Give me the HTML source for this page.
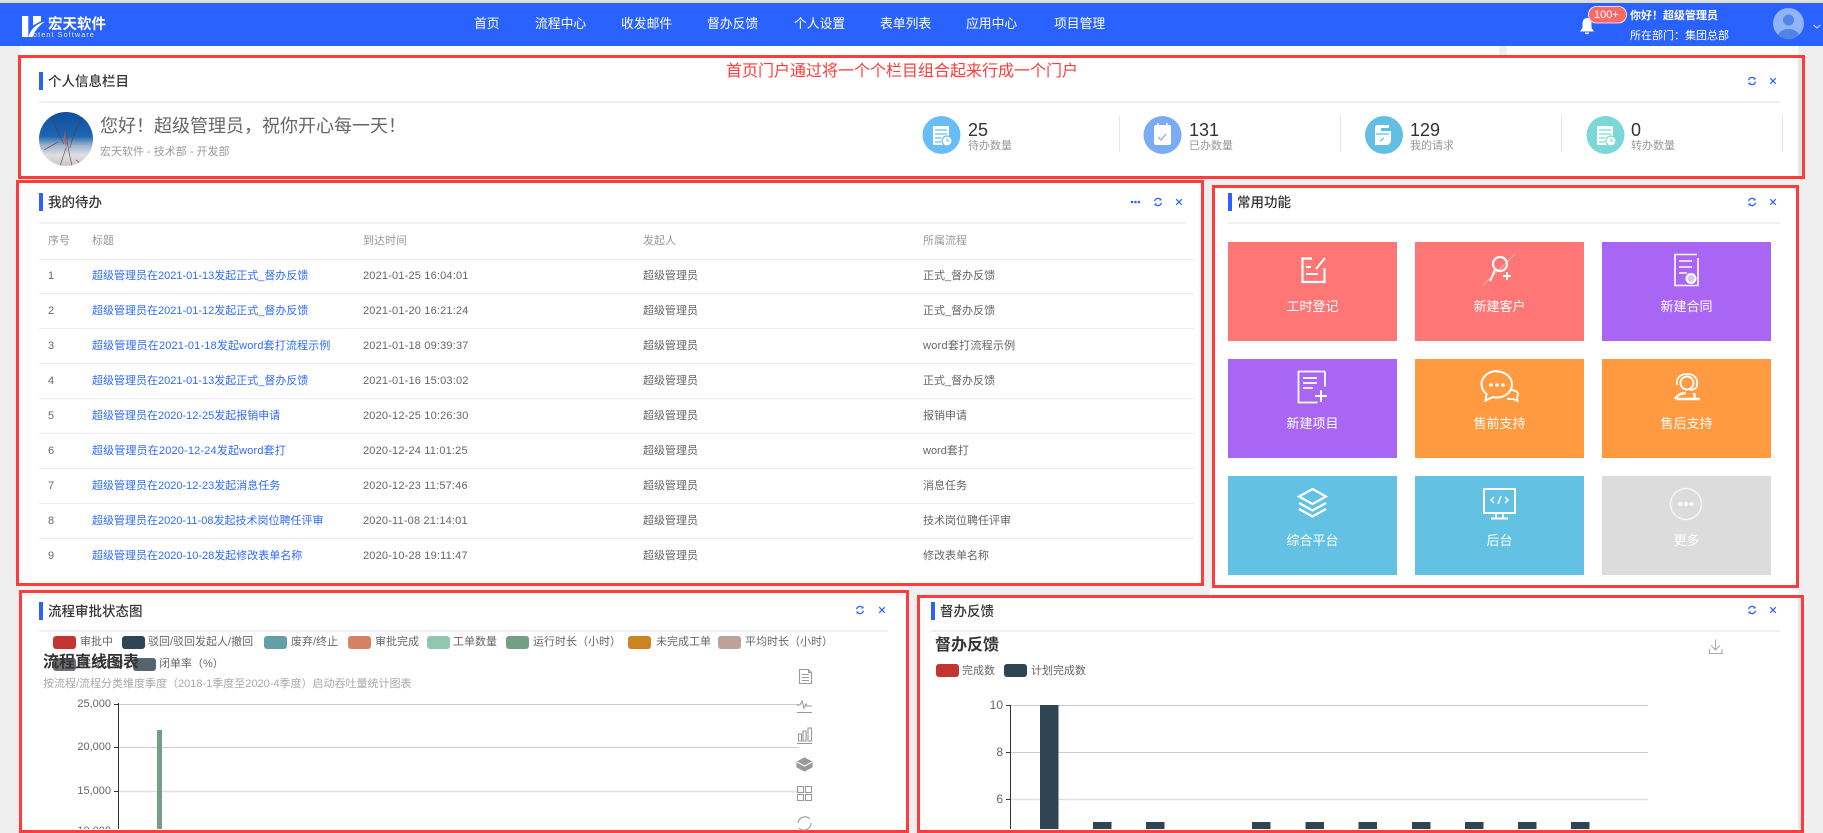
<!DOCTYPE html>
<html lang="zh">
<head>
<meta charset="utf-8">
<title>首页门户</title>
<style>
html,body{margin:0;padding:0;width:1823px;height:833px;overflow:hidden;background:#efefef;font-family:"Liberation Sans","Noto Sans CJK SC",sans-serif;}
#p{position:absolute;left:0;top:0;width:1823px;height:833px;overflow:hidden;filter:blur(.3px);}
.a{position:absolute;}
.t{position:absolute;white-space:nowrap;line-height:20px;height:20px;font-size:11px;}
.box{position:absolute;box-sizing:border-box;border:3px solid #ff3b3b;background:#fff;}
.w{position:absolute;background:#fff;}
.bar{position:absolute;width:4px;height:18px;background:#2962ff;}
.hr{position:absolute;height:2px;background:#eef0f5;}
.title{font-size:13.5px;color:#333;font-weight:500;}
.nav{color:#fff;font-size:12.8px;top:14px;}
.th{color:#999;top:231px;}
.td{color:#666;}
.dt{letter-spacing:.18px;}
.lk{color:#2f6bff;}
.rl{position:absolute;left:39px;width:1155px;height:1px;background:#e9ecf2;}
.tile{position:absolute;width:169px;height:99px;}
.tl{position:absolute;left:0;width:100%;top:55px;text-align:center;color:#fff;font-size:13px;line-height:20px;}
.num{font-size:18px;color:#333;top:120px;}
.sl{color:#999;top:136px;}
.sw{position:absolute;width:23px;height:13px;border-radius:3px;}
.lg{color:#666;}
.ax{color:#666;text-align:right;width:60px;}
</style>
</head>
<body>
<div id="p">
<div class="a" style="left:0;top:0;width:1823px;height:3px;background:#dedede"></div>
<div class="a" style="left:0;top:3px;width:1823px;height:43px;background:#2962ff"></div>
<div class="w" style="left:20px;top:46px;width:1479px;height:9px"></div>
<div class="w" style="left:1507px;top:46px;width:291px;height:9px"></div>
<div class="w" style="left:1210px;top:586px;width:588px;height:10px"></div>

<div class="box" style="left:18px;top:55px;width:1787px;height:124px"></div>
<div class="a" style="left:1798px;top:58px;width:4px;height:118px;background:#e6e6ea"></div>
<div class="box" style="left:16px;top:180px;width:1188px;height:406px"></div>
<div class="box" style="left:1212px;top:185px;width:587px;height:403px"></div>
<div class="box" style="left:19px;top:590px;width:890px;height:243px"></div>
<div class="box" style="left:917px;top:595px;width:887px;height:238px"></div>
<div class="a" style="left:1798px;top:598px;width:3px;height:231px;background:#e6e6ea"></div>

<!-- tiles -->
<div class="tile" style="left:1228px;top:242px;background:#ff7676"><div class="tl">工时登记</div></div>
<div class="tile" style="left:1415px;top:242px;background:#ff7676"><div class="tl">新建客户</div></div>
<div class="tile" style="left:1602px;top:242px;background:#a966f5"><div class="tl">新建合同</div></div>
<div class="tile" style="left:1228px;top:359px;background:#a966f5"><div class="tl">新建项目</div></div>
<div class="tile" style="left:1415px;top:359px;background:#ff9a40"><div class="tl">售前支持</div></div>
<div class="tile" style="left:1602px;top:359px;background:#ff9a40"><div class="tl">售后支持</div></div>
<div class="tile" style="left:1228px;top:476px;background:#63c1e3"><div class="tl">综合平台</div></div>
<div class="tile" style="left:1415px;top:476px;background:#63c1e3"><div class="tl">后台</div></div>
<div class="tile" style="left:1602px;top:476px;background:#dcdcdc"><div class="tl">更多</div></div>

<!-- dividers -->
<div class="hr" style="left:39px;top:101px;width:1741px"></div>
<div class="hr" style="left:39px;top:222px;width:1147px"></div>
<div class="hr" style="left:1228px;top:222px;width:552px"></div>
<div class="hr" style="left:39px;top:630px;width:849px"></div>
<div class="hr" style="left:931px;top:630px;width:849px"></div>
<div class="bar" style="left:39px;top:72px"></div>
<div class="bar" style="left:39px;top:193px"></div>
<div class="bar" style="left:1228px;top:193px"></div>
<div class="bar" style="left:39px;top:602px"></div>
<div class="bar" style="left:931px;top:602px"></div>

<!-- table lines -->
<div class="rl" style="top:259px"></div><div class="rl" style="top:293px"></div><div class="rl" style="top:328px"></div>
<div class="rl" style="top:363px"></div><div class="rl" style="top:398px"></div><div class="rl" style="top:433px"></div>
<div class="rl" style="top:468px"></div><div class="rl" style="top:503px"></div><div class="rl" style="top:538px"></div>

<!-- chart swatches -->
<div class="sw" style="left:53px;top:636px;background:#c23531"></div>
<div class="sw" style="left:122px;top:636px;background:#2f4554"></div>
<div class="sw" style="left:264px;top:636px;background:#61a0a8"></div>
<div class="sw" style="left:348px;top:636px;background:#d48265"></div>
<div class="sw" style="left:427px;top:636px;background:#91c7ae"></div>
<div class="sw" style="left:506px;top:636px;background:#749f83"></div>
<div class="sw" style="left:628px;top:636px;background:#ca8622"></div>
<div class="sw" style="left:718px;top:636px;background:#bda29a"></div>
<div class="sw" style="left:53px;top:658px;background:#6e7074"></div>
<div class="sw" style="left:133px;top:658px;background:#546570"></div>
<div class="sw" style="left:936px;top:664px;background:#c23531"></div>
<div class="sw" style="left:1004px;top:664px;background:#2f4554"></div>

<svg class="a" style="left:0;top:0" width="1823" height="833" viewBox="0 0 1823 833" fill="none">
<defs>
<symbol id="rf" viewBox="0 0 10 10"><path d="M1.2 4.2A3.9 3.9 0 0 1 8 2.4M8.8 5.8A3.9 3.9 0 0 1 2 7.6" stroke="#2962ff" stroke-width="1.4"/><path d="M8.9 0.6V3.4H6.2zM1.1 9.4V6.6H3.8z" fill="#2962ff"/></symbol>
<symbol id="cl" viewBox="0 0 10 10"><path d="M1.5 1.5L8.5 8.5M8.5 1.5L1.5 8.5" stroke="#2962ff" stroke-width="1.5"/></symbol>
<clipPath id="av1"><circle cx="66" cy="139" r="27"/></clipPath>
<clipPath id="av2"><circle cx="1788.5" cy="23.5" r="15.5"/></clipPath>
<linearGradient id="sky" x1="0" y1="0" x2="0" y2="1"><stop offset="0" stop-color="#0f4f9e"/><stop offset=".45" stop-color="#1c66b2"/><stop offset=".62" stop-color="#9db3cc"/><stop offset=".8" stop-color="#dfe0e3"/><stop offset="1" stop-color="#c9c6c8"/></linearGradient>
</defs>

<!-- logo -->
<g fill="#fff">
<rect x="22" y="16" width="6.3" height="21"/>
<path d="M33 16h8v5l-8 4.5z"/>
<path d="M28.500 37C30.500 29 36 24 45 21.500 40 25 35 30 32.500 37z"/>
</g>

<!-- bell -->
<path d="M1587 18c-3 0-4.500 2.500-4.500 5.500v4.500l-2.500 3.500h14L1591.500 28v-4.500c0-3-1.500-5.500-4.500-5.500z" fill="#fff"/>
<path d="M1585 32.500a2 1.800 0 0 0 4 0z" fill="#fff"/>
<rect x="1588.500" y="6.500" width="38" height="16.500" rx="8" fill="#f86a6a" stroke="#fff" stroke-width=".8"/>

<!-- header avatar -->
<circle cx="1788.500" cy="23.500" r="15.500" fill="#8fb4f7"/>
<g clip-path="url(#av2)"><circle cx="1788.500" cy="20" r="5.500" fill="#4f84e8"/><ellipse cx="1788.500" cy="37" rx="11" ry="8" fill="#4f84e8"/></g>
<path d="M1813.500 25l3.500 3 3.500-3" stroke="#dfe8ff" stroke-width="1"/>

<!-- profile photo -->
<circle cx="66" cy="139" r="27" fill="url(#sky)"/>
<g clip-path="url(#av1)" stroke="#7a3036" stroke-width=".8" opacity=".75">
<path d="M50 112c4 10 8 22 14 32M66 130c0 12 4 26 6 36M82 118c-5 10-10 20-12 30M44 150l14-8M60 166l6-18M76 160l8 6"/>
<path d="M65 129l2 12-1 6-2-8z" fill="#b25a50" stroke="none"/>
</g>

<!-- stat circles -->
<circle cx="941.500" cy="135" r="19" fill="#68bcf8"/>
<circle cx="1162.500" cy="135" r="19" fill="#7aabf5"/>
<circle cx="1384" cy="135" r="19" fill="#62bfe3"/>
<circle cx="1605.500" cy="135" r="19" fill="#7cd8d8"/>
<g fill="#fff">
<rect x="933" y="126" width="16" height="19" rx="1"/>
<rect x="1154" y="125" width="17" height="20" rx="2"/>
<path d="M1375 128c0-2 1-3 3-3h11v3h-8v3h10v9c0 2-1 5-5 5h-11z"/>
<rect x="1597" y="126" width="16" height="19" rx="1"/>
</g>
<g stroke="#68bcf8" stroke-width="1.200"><path d="M935 130h12M935 134h12M935 138h6M935 142h6"/></g>
<circle cx="947" cy="141" r="5" fill="#fff" stroke="#68bcf8" stroke-width="1.200"/><path d="M947 138v3h2.500" stroke="#68bcf8"/>
<g stroke="#7aabf5" stroke-width="1.200"><path d="M1158 123v4M1167 123v4M1158 137l3 3 5-6"/></g>
<path d="M1158 123v4M1167 123v4" stroke="#fff" stroke-width="1.500"/>
<g stroke="#62bfe3" stroke-width="1.200"><path d="M1376 134h13M1380 141l4-3"/></g>
<g stroke="#7cd8d8" stroke-width="1.200"><path d="M1599 130h12M1599 134h12M1599 138h6M1599 142h6"/></g>
<circle cx="1611" cy="141" r="5" fill="#fff" stroke="#7cd8d8" stroke-width="1.200"/><path d="M1611 138v3h2.500" stroke="#7cd8d8"/>
<g stroke="#e5e5e5"><path d="M1119.500 116v36M1340.500 116v36M1561.500 116v36M1782.500 116v36"/></g>

<!-- card tool icons -->
<use href="#rf" x="1747.500" y="76.500" width="9" height="9"/><use href="#cl" x="1769" y="77" width="8" height="8"/>
<g fill="#2962ff"><circle cx="1132" cy="202" r="1.300"/><circle cx="1135.500" cy="202" r="1.300"/><circle cx="1139" cy="202" r="1.300"/></g>
<use href="#rf" x="1153.500" y="197.500" width="9" height="9"/><use href="#cl" x="1175" y="198" width="8" height="8"/>
<use href="#rf" x="1747.500" y="197.500" width="9" height="9"/><use href="#cl" x="1769" y="198" width="8" height="8"/>
<use href="#rf" x="855.500" y="605.500" width="9" height="9"/><use href="#cl" x="878" y="606" width="8" height="8"/>
<use href="#rf" x="1747.500" y="605.500" width="9" height="9"/><use href="#cl" x="1769" y="606" width="8" height="8"/>

<!-- tile icons -->
<g stroke="#fff" stroke-width="2.200">
<path d="M1312 258.500h-9.500v23.500h22V268"/><path d="M1325 258l-9 11" stroke-width="2"/><path d="M1306 267h5M1306 274h12" stroke-width="2"/>
<circle cx="1500" cy="264" r="7"/><path d="M1495 270c-2 3-3 8-5 11" stroke-width="2"/><path d="M1503 276h8M1507 272v8" stroke-width="2"/>
<path d="M1482.500 285.700L1515 254" stroke-width=".6" opacity=".7"/>
<path d="M1697 254.500h-22v31h23V258" stroke-width="1.600"/><path d="M1679 261h13M1679 267h13M1679 273h8" stroke-width="1.600"/>
<circle cx="1691" cy="278.500" r="4.500" stroke-width="2" fill="#dcc4fb"/>
<path d="M1325 371.500h-26.500v31h19M1325 371.500v15" stroke-width="1.800"/><path d="M1303 378h14M1303 383h14M1303 388h10" stroke-width="1.800"/><path d="M1315 396h12M1321 390v12" stroke-width="2"/>
<path d="M1497 371.500c8.500 0 15 6 15 13s-6.500 13-15 13c-1.500 0-3 0-4-.500l-7.500 3.500 1-6.500c-3-2.500-5-6-5-10 0-7 7-13 15.500-13z" stroke-width="2"/>
<path d="M1510 390c3 0 7 1 8 3 .500 2-.500 3-1 4l.500 4-4.500-2c-2 .500-4 0-6-.500" stroke-width="1.800"/>
<circle cx="1687" cy="383" r="6.500" stroke-width="2"/><path d="M1677 385c-1-7 3-11 10-11s11 4 10 11M1697 385c0 3-3 5-7 5" stroke-width="1.800"/><path d="M1675 399c3-5 7-6 11-6M1694 393l1 6M1677 399h23" stroke-width="2.400"/>
<path d="M1312.500 489l13.500 7.500-13.500 7.500-13.500-7.500z" stroke-width="2.200"/><path d="M1299 503l13.500 7.500L1326 503M1299 509l13.500 7.500L1326 509" stroke-width="2.200"/>
<rect x="1484" y="489" width="31" height="24" stroke-width="2"/><path d="M1494 497l-3 3 3 3M1505 497l3 3-3 3M1501 496l-3 8" stroke-width="1.500"/><path d="M1496 513v5M1503 513v5M1491 518.500h17" stroke-width="2"/>
<circle cx="1686" cy="504" r="15.500" stroke="#f4f4f4" stroke-width="1.500"/>
</g>
<g fill="#fff"><circle cx="1491" cy="385" r="1.800"/><circle cx="1497" cy="385" r="1.800"/><circle cx="1503" cy="385" r="1.800"/><circle cx="1680.500" cy="504" r="2"/><circle cx="1686" cy="504" r="2"/><circle cx="1691.500" cy="504" r="2"/></g>

<!-- chart 1 -->
<g stroke="#ccc"><path d="M118 704.500H799M118 747.500H799"/></g>
<path d="M118 791.500H799" stroke="#e0e0e0" stroke-width="1.500"/>
<path d="M118.500 703V829M114 704.500h4M114 747.500h4M114 791.500h4" stroke="#333"/>
<rect x="157" y="730" width="5" height="99" fill="#749f83"/>
<!-- toolbox -->
<g stroke="#999" stroke-width="1.100">
<path d="M799.500 669.500h9l3 3v11h-12zM808.500 669.500v3h3M802 674.500h7M802 677.500h7M802 680.500h7"/>
<path d="M797 705h3l2-4 2 7 2-4 1 2 5 0M797 712.500h15"/>
<path d="M798.500 734h3v7h-3zM803 731h3v10h-3zM808 728h3.500v13H808zM797 743.500h15"/>
<path d="M804.500 758l7.500 4v5l-7.500 4-7.500-4v-5z" fill="#999"/><path d="M797 762l7.500 4 7.500-4" stroke="#fff"/>
<path d="M797.500 786.500h6v6h-6zM805.500 786.500h6v6h-6zM797.500 794.500h6v6h-6zM805.500 794.500h6v6h-6z"/>
<path d="M798 823a7 7 0 0 1 12-4M811 823a7 7 0 0 1-12 5"/>
</g>

<!-- chart 2 -->
<g stroke="#ccc"><path d="M1010 705.500H1648M1010 752.500H1648"/></g>
<path d="M1010 799.500H1648" stroke="#e0e0e0" stroke-width="1.500"/>
<path d="M1010.500 705V829M1006 705.500h4M1006 752.500h4M1006 799.500h4" stroke="#333"/>
<g fill="#2f4554">
<rect x="1040" y="705" width="18.500" height="124"/>
<rect x="1093" y="822" width="18.500" height="7"/><rect x="1146" y="822" width="18.500" height="7"/>
<rect x="1252" y="822" width="18.500" height="7"/><rect x="1305.500" y="822" width="18.500" height="7"/>
<rect x="1358.500" y="822" width="18.500" height="7"/><rect x="1412" y="822" width="18.500" height="7"/>
<rect x="1465" y="822" width="18.500" height="7"/><rect x="1518" y="822" width="18.500" height="7"/>
<rect x="1571" y="822" width="18.500" height="7"/>
</g>
<path d="M1715.500 639.500v10M1711 645.500l4.500 4.500 4.500-4.500M1709.500 649v4.500h12.500V649" stroke="#aaa" stroke-width="1.100"/>
</svg>

<!-- logo text -->
<div class="t" style="left:48px;top:15px;font-size:14.5px;font-weight:700;color:#fff">宏天软件</div>
<div class="t" style="left:33px;top:26px;font-size:7px;letter-spacing:1.2px;color:#e8eeff">otent Software</div>

<!-- nav -->
<div class="t nav" style="left:474px">首页</div>
<div class="t nav" style="left:535px">流程中心</div>
<div class="t nav" style="left:621px">收发邮件</div>
<div class="t nav" style="left:707px">督办反馈</div>
<div class="t nav" style="left:794px">个人设置</div>
<div class="t nav" style="left:880px">表单列表</div>
<div class="t nav" style="left:966px">应用中心</div>
<div class="t nav" style="left:1054px">项目管理</div>

<div class="t" style="left:1594px;top:5px;color:#fff">100+</div>
<div class="t" style="left:1630px;top:6px;color:#fff;font-weight:700">你好！超级管理员</div>
<div class="t" style="left:1630px;top:26px;color:#fff">所在部门：集团总部</div>

<!-- box 1 -->
<div class="t title" style="left:48px;top:72px">个人信息栏目</div>
<div class="t" style="left:726px;top:62px;font-size:16px;color:#ff3b3b">首页门户通过将一个个栏目组合起来行成一个门户</div>
<div class="t" style="left:100px;top:116px;font-size:18px;color:#666">您好！超级管理员，祝你开心每一天！</div>
<div class="t" style="left:100px;top:142px;color:#999">宏天软件 - 技术部 - 开发部</div>
<div class="t num" style="left:968px">25</div><div class="t sl" style="left:968px">待办数量</div>
<div class="t num" style="left:1189px">131</div><div class="t sl" style="left:1189px">已办数量</div>
<div class="t num" style="left:1410px">129</div><div class="t sl" style="left:1410px">我的请求</div>
<div class="t num" style="left:1631px">0</div><div class="t sl" style="left:1631px">转办数量</div>

<!-- box 2 -->
<div class="t title" style="left:48px;top:193px">我的待办</div>
<div class="t th" style="left:48px">序号</div><div class="t th" style="left:92px">标题</div><div class="t th" style="left:363px">到达时间</div><div class="t th" style="left:643px">发起人</div><div class="t th" style="left:923px">所属流程</div>

<div class="t td" style="left:48px;top:266px">1</div><div class="t lk" style="left:92px;top:266px">超级管理员在2021-01-13发起正式_督办反馈</div><div class="t td dt" style="left:363px;top:266px">2021-01-25 16:04:01</div><div class="t td" style="left:643px;top:266px">超级管理员</div><div class="t td" style="left:923px;top:266px">正式_督办反馈</div>
<div class="t td" style="left:48px;top:301px">2</div><div class="t lk" style="left:92px;top:301px">超级管理员在2021-01-12发起正式_督办反馈</div><div class="t td dt" style="left:363px;top:301px">2021-01-20 16:21:24</div><div class="t td" style="left:643px;top:301px">超级管理员</div><div class="t td" style="left:923px;top:301px">正式_督办反馈</div>
<div class="t td" style="left:48px;top:336px">3</div><div class="t lk" style="left:92px;top:336px;letter-spacing:.16px">超级管理员在2021-01-18发起word套打流程示例</div><div class="t td dt" style="left:363px;top:336px">2021-01-18 09:39:37</div><div class="t td" style="left:643px;top:336px">超级管理员</div><div class="t td" style="left:923px;top:336px;letter-spacing:.25px">word套打流程示例</div>
<div class="t td" style="left:48px;top:371px">4</div><div class="t lk" style="left:92px;top:371px">超级管理员在2021-01-13发起正式_督办反馈</div><div class="t td dt" style="left:363px;top:371px">2021-01-16 15:03:02</div><div class="t td" style="left:643px;top:371px">超级管理员</div><div class="t td" style="left:923px;top:371px">正式_督办反馈</div>
<div class="t td" style="left:48px;top:406px">5</div><div class="t lk" style="left:92px;top:406px">超级管理员在2020-12-25发起报销申请</div><div class="t td dt" style="left:363px;top:406px">2020-12-25 10:26:30</div><div class="t td" style="left:643px;top:406px">超级管理员</div><div class="t td" style="left:923px;top:406px">报销申请</div>
<div class="t td" style="left:48px;top:441px">6</div><div class="t lk" style="left:92px;top:441px;letter-spacing:.16px">超级管理员在2020-12-24发起word套打</div><div class="t td dt" style="left:363px;top:441px">2020-12-24 11:01:25</div><div class="t td" style="left:643px;top:441px">超级管理员</div><div class="t td" style="left:923px;top:441px">word套打</div>
<div class="t td" style="left:48px;top:476px">7</div><div class="t lk" style="left:92px;top:476px">超级管理员在2020-12-23发起消息任务</div><div class="t td dt" style="left:363px;top:476px">2020-12-23 11:57:46</div><div class="t td" style="left:643px;top:476px">超级管理员</div><div class="t td" style="left:923px;top:476px">消息任务</div>
<div class="t td" style="left:48px;top:511px">8</div><div class="t lk" style="left:92px;top:511px">超级管理员在2020-11-08发起技术岗位聘任评审</div><div class="t td dt" style="left:363px;top:511px">2020-11-08 21:14:01</div><div class="t td" style="left:643px;top:511px">超级管理员</div><div class="t td" style="left:923px;top:511px">技术岗位聘任评审</div>
<div class="t td" style="left:48px;top:546px">9</div><div class="t lk" style="left:92px;top:546px">超级管理员在2020-10-28发起修改表单名称</div><div class="t td dt" style="left:363px;top:546px">2020-10-28 19:11:47</div><div class="t td" style="left:643px;top:546px">超级管理员</div><div class="t td" style="left:923px;top:546px">修改表单名称</div>

<!-- box 5 -->
<div class="t title" style="left:1237px;top:193px">常用功能</div>

<!-- box 3 -->
<div class="t title" style="left:48px;top:602px">流程审批状态图</div>
<div class="t lg" style="left:80px;top:632px">审批中</div>
<div class="t lg" style="left:148px;top:632px">驳回/驳回发起人/撤回</div>
<div class="t lg" style="left:291px;top:632px">废弃/终止</div>
<div class="t lg" style="left:375px;top:632px">审批完成</div>
<div class="t lg" style="left:453px;top:632px">工单数量</div>
<div class="t lg" style="left:533px;top:632px">运行时长（小时）</div>
<div class="t lg" style="left:656px;top:632px">未完成工单</div>
<div class="t lg" style="left:745px;top:632px">平均时长（小时）</div>
<div class="t lg" style="left:80px;top:654px">完成工单</div>
<div class="t lg" style="left:159px;top:654px">闭单率（%）</div>
<div class="t" style="left:43px;top:653px;font-size:16px;font-weight:700;color:#333">流程直线图表</div>
<div class="t" style="left:43px;top:674px;color:#aaa">按流程/流程分类维度季度（2018-1季度至2020-4季度）启动吞吐量统计图表</div>
<div class="t ax" style="left:51px;top:694px">25,000</div>
<div class="t ax" style="left:51px;top:737px">20,000</div>
<div class="t ax" style="left:51px;top:781px">15,000</div>

<!-- box 4 -->
<div class="t title" style="left:940px;top:602px">督办反馈</div>
<div class="t" style="left:935px;top:636px;font-size:16px;font-weight:700;color:#333">督办反馈</div>
<div class="t lg" style="left:962px;top:661px">完成数</div>
<div class="t lg" style="left:1031px;top:661px">计划完成数</div>
<div class="t ax" style="left:943px;top:695px;font-size:12px">10</div>
<div class="t ax" style="left:943px;top:742px;font-size:12px">8</div>
<div class="t ax" style="left:943px;top:789px;font-size:12px">6</div>

<!-- bottom crop for chart label -->
<div class="t ax" style="left:51px;top:825px;height:4px;overflow:hidden;line-height:12px;">10,000</div>
</div>
</body>
</html>
